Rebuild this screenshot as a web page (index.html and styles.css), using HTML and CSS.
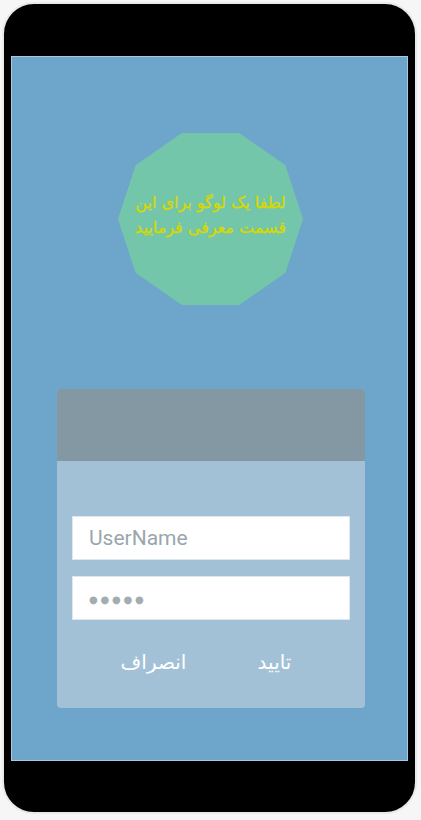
FILE: index.html
```html
<!DOCTYPE html>
<html lang="fa">
<head>
<meta charset="utf-8">
<title>Login</title>
<link rel="stylesheet" href="styles.css">
</head>
<body>
<div class="phone">
  <div class="screen">
    <div class="logo">
      <p class="logo-text" dir="rtl">لطفا یک لوگو برای این<br>قسمت معرفی فرمایید</p>
    </div>
    <div class="card">
      <div class="card-header"></div>
      <div class="card-body">
        <div class="field"><span class="placeholder">UserName</span></div>
        <div class="field"><span class="dots">●●●●●</span></div>
        <div class="actions" dir="rtl">
          <span class="btn">تایید</span>
          <span class="btn">انصراف</span>
        </div>
      </div>
    </div>
  </div>
</div>
</body>
</html>
```

FILE: styles.css
```css
html, body {
  margin: 0;
  padding: 0;
  background: #f6f6f6;
}
body {
  padding: 2px 0 0 2px;
}
.phone {
  box-sizing: border-box;
  width: 415px;
  height: 812px;
  background: #000;
  border: 2px solid #e9e9e9;
  border-radius: 32px;
  padding: 52px 7px 0 7px;
}
.screen {
  width: 397px;
  height: 705px;
  box-sizing: border-box;
  background: #6da5cb;
  border: 1px solid #a9c8df;
  display: flex;
  flex-direction: column;
  align-items: center;
}
.logo {
  margin-top: 76px;
  margin-left: 2px;
  width: 185px;
  height: 172px;
  background: #74c6ab;
  clip-path: polygon(100% 50%, 90.5% 81.3%, 65.5% 100%, 34.5% 100%, 9.5% 81.3%, 0% 50%, 9.5% 18.7%, 34.5% 0%, 65.5% 0%, 90.5% 18.7%);
  display: flex;
  align-items: center;
  justify-content: center;
}
.logo-text {
  margin: 0 0 8px 0;
  font-family: "DejaVu Sans", sans-serif;
  font-size: 16px;
  line-height: 25px;
  color: #d8d800;
  text-align: center;
  -webkit-text-stroke: 0.3px #d8d800;
}
.card {
  margin-top: 84px;
  margin-left: 3px;
  width: 308px;
  height: 319px;
  border-radius: 4px;
  overflow: hidden;
  background: #a3c1d6;
  display: flex;
  flex-direction: column;
}
.card-header {
  height: 72px;
  background: #8398a2;
}
.card-body {
  padding: 55px 15px 0 15px;
  display: flex;
  flex-direction: column;
  gap: 16px;
}
.field {
  height: 44px;
  box-sizing: border-box;
  background: #fff;
  border: 1px solid #dde7ee;
  display: flex;
  align-items: center;
  padding-left: 16px;
  font-family: Roboto, sans-serif;
  color: #9aa6ac;
}
.placeholder {
  font-size: 21px;
}
.dots {
  font-family: "DejaVu Sans", sans-serif;
  font-size: 10px;
  letter-spacing: 2.8px;
  color: #a3acb1;
  padding-top: 2px;
}
.actions {
  display: flex;
  justify-content: center;
  margin-top: 8px;
  padding-left: 6px;
}
.btn {
  width: 121px;
  text-align: center;
  font-family: "DejaVu Sans", sans-serif;
  font-size: 20px;
  line-height: 36px;
  color: #ffffff;
}
```
